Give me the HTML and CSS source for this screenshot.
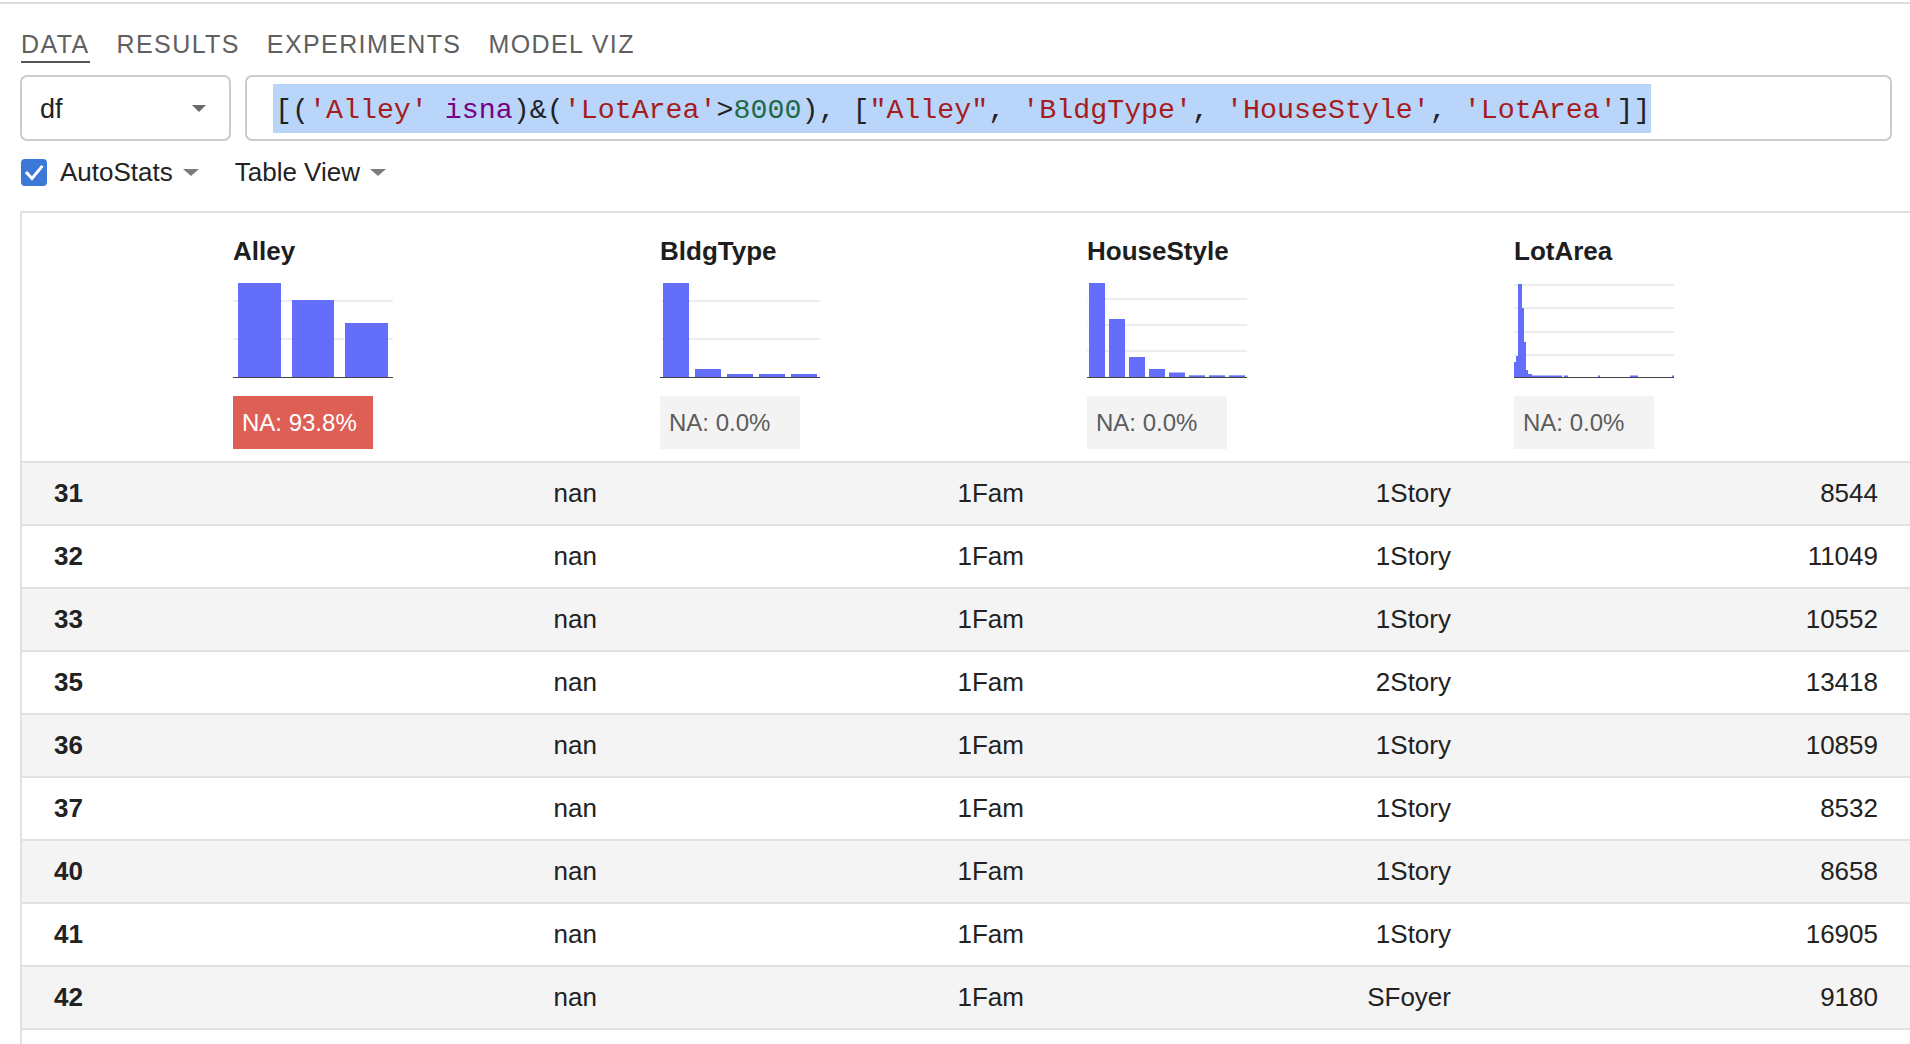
FILE: index.html
```html
<!DOCTYPE html>
<html>
<head>
<meta charset="utf-8">
<link rel="stylesheet" href="styles.css">
</head>
<body>
<div class="topline"></div>
<div class="page">
  <nav class="tabs">
    <div class="tab active">DATA</div>
    <div class="tab">RESULTS</div>
    <div class="tab">EXPERIMENTS</div>
    <div class="tab">MODEL VIZ</div>
  </nav>

  <div class="query-row">
    <div class="select"><span class="select-value">df</span><span class="caret caret-lg"></span></div>
    <div class="query"><span class="sel"><span class="p">[(</span><span class="s">'Alley'</span><span class="p"> </span><span class="k">isna</span><span class="p">)&amp;(</span><span class="s">'LotArea'</span><span class="p">&gt;</span><span class="n">8000</span><span class="p">), [</span><span class="s">"Alley"</span><span class="p">, </span><span class="s">'BldgType'</span><span class="p">, </span><span class="s">'HouseStyle'</span><span class="p">, </span><span class="s">'LotArea'</span><span class="p">]]</span></span></div>
  </div>

  <div class="options">
    <svg class="checkbox" width="26" height="27" viewBox="0 0 26 27"><rect x="0" y="0" width="26" height="27" rx="4" ry="4" fill="#3b78d8"/><polyline points="6,14 11,19.5 20.5,8" fill="none" stroke="#fff" stroke-width="3" stroke-linecap="square"/></svg>
    <span class="opt-label">AutoStats</span><span class="caret"></span>
    <span class="opt-label view">Table View</span><span class="caret"></span>
  </div>

  <div class="table">
    <div class="thead">
      <div class="hcell index-h"></div>
      <div class="hcell">
        <div class="col-title">Alley</div>
        <svg class="chart" width="160" height="97" viewBox="0 0 160 97">
          <rect class="grid" x="0" y="19" width="160" height="2"/>
          <rect class="grid" x="0" y="57" width="160" height="2"/>
          <rect class="bar" x="5" y="2" width="43" height="94"/>
          <rect class="bar" x="59" y="19" width="42" height="77"/>
          <rect class="bar" x="112" y="42" width="43" height="54"/>
          <rect class="axis" x="0" y="96" width="160" height="1"/>
        </svg>
        <div class="badge badge-red">NA: 93.8%</div>
      </div>
      <div class="hcell">
        <div class="col-title">BldgType</div>
        <svg class="chart" width="160" height="97" viewBox="0 0 160 97">
          <rect class="grid" x="0" y="19" width="160" height="2"/>
          <rect class="grid" x="0" y="57" width="160" height="2"/>
          <rect class="bar" x="3" y="2" width="26" height="94"/>
          <rect class="bar" x="35" y="88" width="26" height="8"/>
          <rect class="bar" x="67" y="93" width="26" height="3"/>
          <rect class="bar" x="99" y="93" width="26" height="3"/>
          <rect class="bar" x="131" y="93" width="26" height="3"/>
          <rect class="axis" x="0" y="96" width="160" height="1"/>
        </svg>
        <div class="badge">NA: 0.0%</div>
      </div>
      <div class="hcell">
        <div class="col-title">HouseStyle</div>
        <svg class="chart" width="160" height="97" viewBox="0 0 160 97">
          <rect class="grid" x="0" y="17" width="160" height="2"/>
          <rect class="grid" x="0" y="43" width="160" height="2"/>
          <rect class="grid" x="0" y="69" width="160" height="2"/>
          <rect class="bar" x="2" y="2" width="16" height="94"/>
          <rect class="bar" x="22" y="38" width="16" height="58"/>
          <rect class="bar" x="42" y="76" width="16" height="20"/>
          <rect class="bar" x="62" y="88" width="16" height="8"/>
          <rect class="bar" x="82" y="91.5" width="16" height="4.5"/>
          <rect class="bar" x="102" y="94.3" width="16" height="1.7"/>
          <rect class="bar" x="122" y="94.3" width="16" height="1.7"/>
          <rect class="bar" x="142" y="94.3" width="16" height="1.7"/>
          <rect class="axis" x="0" y="96" width="160" height="1"/>
        </svg>
        <div class="badge">NA: 0.0%</div>
      </div>
      <div class="hcell">
        <div class="col-title">LotArea</div>
        <svg class="chart" width="160" height="97" viewBox="0 0 160 97">
          <rect class="grid" x="0" y="3" width="160" height="2"/>
          <rect class="grid" x="0" y="26" width="160" height="2"/>
          <rect class="grid" x="0" y="50" width="160" height="2"/>
          <rect class="grid" x="0" y="73" width="160" height="2"/>
          <rect class="axis" x="0" y="96" width="160" height="1"/>
          <rect class="bar" x="0" y="81" width="2" height="15"/>
          <rect class="bar" x="2" y="75" width="2" height="21"/>
          <rect class="bar" x="4" y="3" width="4" height="93"/>
          <rect class="bar" x="8" y="27" width="2" height="69"/>
          <rect class="bar" x="10" y="61" width="2" height="35"/>
          <rect class="bar" x="12" y="89" width="2" height="7"/>
          <rect class="bar" x="14" y="93" width="4" height="3"/>
          <rect class="bar" x="18" y="94.5" width="30" height="1.5"/>
          <rect class="bar" x="50" y="94.5" width="4" height="1.5"/>
          <rect class="bar" x="84" y="94.5" width="2" height="1.5"/>
          <rect class="bar" x="116" y="94.5" width="8" height="1.5"/>
          <rect class="bar" x="158" y="94.5" width="2" height="1.5"/>
        </svg>
        <div class="badge">NA: 0.0%</div>
      </div>
    </div>

    <div class="rows">
      <div class="row"><div class="idx">31</div><div class="val">nan</div><div class="val">1Fam</div><div class="val">1Story</div><div class="val">8544</div></div>
      <div class="row"><div class="idx">32</div><div class="val">nan</div><div class="val">1Fam</div><div class="val">1Story</div><div class="val">11049</div></div>
      <div class="row"><div class="idx">33</div><div class="val">nan</div><div class="val">1Fam</div><div class="val">1Story</div><div class="val">10552</div></div>
      <div class="row"><div class="idx">35</div><div class="val">nan</div><div class="val">1Fam</div><div class="val">2Story</div><div class="val">13418</div></div>
      <div class="row"><div class="idx">36</div><div class="val">nan</div><div class="val">1Fam</div><div class="val">1Story</div><div class="val">10859</div></div>
      <div class="row"><div class="idx">37</div><div class="val">nan</div><div class="val">1Fam</div><div class="val">1Story</div><div class="val">8532</div></div>
      <div class="row"><div class="idx">40</div><div class="val">nan</div><div class="val">1Fam</div><div class="val">1Story</div><div class="val">8658</div></div>
      <div class="row"><div class="idx">41</div><div class="val">nan</div><div class="val">1Fam</div><div class="val">1Story</div><div class="val">16905</div></div>
      <div class="row"><div class="idx">42</div><div class="val">nan</div><div class="val">1Fam</div><div class="val">SFoyer</div><div class="val">9180</div></div>
      <div class="row"></div>
    </div>
  </div>
</div>
</body>
</html>
```
FILE: styles.css
```css
html, body {
  margin: 0;
  padding: 0;
  background: #ffffff;
}

body {
  font-family: "Liberation Sans", Arial, sans-serif;
  color: #222222;
  width: 1910px;
  height: 1044px;
  overflow: hidden;
}

.topline {
  height: 2px;
  margin-top: 2px;
  background: #dddddd;
}

.page {
  padding-left: 20px;
  padding-right: 18px;
}

/* Tabs */
.tabs {
  display: flex;
  gap: 27px;
  padding-left: 1px;
}

.tab {
  font-size: 25px;
  letter-spacing: 1.4px;
  line-height: 30px;
  padding-top: 25px;
  padding-bottom: 2px;
  color: #606060;
  border-bottom: 2px solid transparent;
}

.tab.active {
  border-bottom-color: #555555;
}

/* Query row */
.query-row {
  display: flex;
  gap: 14px;
  margin-top: 12px;
  height: 66px;
}

.select {
  box-sizing: border-box;
  width: 211px;
  height: 66px;
  border: 2px solid #cbcbcb;
  border-radius: 7px;
  display: flex;
  align-items: center;
  justify-content: space-between;
  padding-left: 18px;
  padding-right: 23px;
}

.select-value {
  font-size: 27px;
  color: #222222;
  padding-top: 2px;
}

.query {
  flex: 1;
  box-sizing: border-box;
  height: 66px;
  border: 2px solid #cbcbcb;
  border-radius: 7px;
  display: flex;
  align-items: center;
  padding-left: 26px;
}

.sel {
  display: inline-block;
  background: #b9d5f9;
  line-height: 45px;
  padding-top: 4px;
  padding-left: 2px;
  font-family: "Liberation Mono", "Courier New", monospace;
  font-size: 28.3px;
  white-space: pre;
}

.sel .p { color: #222222; }
.sel .s { color: #a51d1d; }
.sel .k { color: #770088; }
.sel .n { color: #1f6a45; }

/* Carets */
.caret {
  width: 0;
  height: 0;
  border-left: 8px solid transparent;
  border-right: 8px solid transparent;
  border-top: 7px solid #7c7c7c;
  margin-left: 10px;
}

.caret-lg {
  border-left-width: 7px;
  border-right-width: 7px;
  border-top: 7px solid #6a6a6a;
  margin-left: 0;
}

/* Options row */
.options {
  display: flex;
  align-items: center;
  margin-top: 18px;
  height: 27px;
  padding-left: 1px;
}

.checkbox {
  display: block;
}

.opt-label {
  font-size: 26px;
  color: #222222;
  margin-left: 13px;
}

.opt-label.view {
  margin-left: 36px;
}

/* Table */
.table {
  margin-top: 25px;
  margin-right: -18px;
  border-top: 2px solid #e1e1e1;
  border-left: 2px solid #e1e1e1;
}

.thead,
.row {
  display: grid;
  grid-template-columns: 163px repeat(4, 427px);
}

.thead {
  padding-top: 23px;
  padding-bottom: 12px;
  border-bottom: 2px solid #e1e1e1;
  background: #ffffff;
}

.hcell {
  padding-left: 48px;
}

.index-h {
  padding-left: 0;
}

.col-title {
  font-weight: bold;
  font-size: 26px;
  line-height: 30px;
  color: #1e1e1e;
}

.chart {
  display: block;
  margin-top: 15px;
}

.chart .grid { fill: #ededed; }
.chart .bar { fill: #636efa; }
.chart .axis { fill: #444444; }

.badge {
  margin-top: 18px;
  box-sizing: border-box;
  width: 140px;
  height: 53px;
  line-height: 53px;
  padding-left: 9px;
  font-size: 24px;
  background: #f3f3f3;
  color: #5c5c5c;
}

.badge-red {
  background: #de5f56;
  color: #ffffff;
}

.row {
  height: 61px;
  align-items: center;
  border-bottom: 2px solid #e1e1e1;
  font-size: 26px;
  color: #222222;
  background: #ffffff;
}

.rows .row:nth-child(odd) {
  background: #f4f4f4;
}

.idx {
  padding-left: 32px;
  font-weight: bold;
}

.val {
  text-align: right;
  padding-right: 15px;
}
```
